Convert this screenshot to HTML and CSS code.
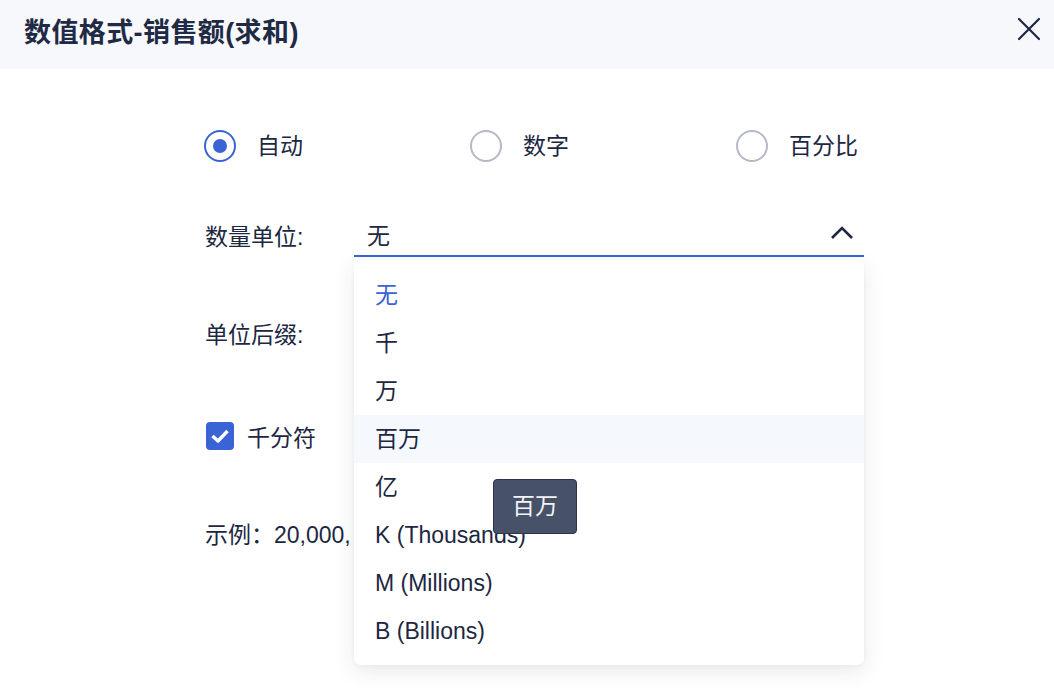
FILE: index.html
```html
<!DOCTYPE html>
<html lang="zh">
<head>
<meta charset="utf-8">
<link rel="stylesheet" href="styles.css">
</head>
<body>
<div class="dialog">
  <div class="header">
    <div class="title">数值格式-销售额(求和)</div>
    <svg class="close" width="24" height="24" viewBox="0 0 24 24"><path d="M2 2 L22 22 M22 2 L2 22" stroke="#1d2742" stroke-width="2.2" stroke-linecap="round" fill="none"/></svg>
  </div>
  <div class="body">
    <div class="radio-row">
      <label class="radio-item checked"><span class="radio"></span><span class="rlabel">自动</span></label>
      <label class="radio-item"><span class="radio"></span><span class="rlabel">数字</span></label>
      <label class="radio-item last"><span class="radio"></span><span class="rlabel">百分比</span></label>
    </div>
    <div class="field unit-row">
      <div class="flabel">数量单位:</div>
      <div class="select">
        <span class="sval">无</span>
        <svg class="chev" width="24" height="14" viewBox="0 0 24 14"><path d="M2 12 L12 2 L22 12" stroke="#1d2742" stroke-width="2.6" fill="none"/></svg>
        <div class="dropdown">
          <div class="opt selected">无</div>
          <div class="opt">千</div>
          <div class="opt">万</div>
          <div class="opt hover">百万<div class="tooltip">百万</div></div>
          <div class="opt">亿</div>
          <div class="opt">K (Thousands)</div>
          <div class="opt">M (Millions)</div>
          <div class="opt">B (Billions)</div>
        </div>
      </div>
    </div>
    <div class="field suffix-row">
      <div class="flabel">单位后缀:</div>
    </div>
    <div class="check-row">
      <span class="checkbox"><svg width="20" height="16" viewBox="0 0 20 16"><path d="M2.5 8 L8 13 L17.5 3" stroke="#fff" stroke-width="3.4" fill="none" stroke-linejoin="round"/></svg></span>
      <span class="clabel">千分符</span>
    </div>
    <div class="example-row">示例：20,000,</div>
  </div>
</div>
</body>
</html>
```
FILE: styles.css
```css
* { box-sizing: border-box; }
html, body { margin: 0; padding: 0; background: #fff; }
body {
  font-family: "Liberation Sans", "Noto Sans CJK SC", sans-serif;
  color: #1d2742;
  width: 1054px;
  height: 688px;
  overflow: hidden;
}
.dialog { width: 1054px; height: 688px; position: relative; }
.header {
  height: 69px;
  background: #f7f8fc;
  display: flex;
  align-items: center;
  justify-content: space-between;
  padding: 0 13px 0 24px;
}
.title {
  font-size: 27px;
  font-weight: 700;
  color: #1f2a44;
  margin-top: -9px;
  letter-spacing: 0.4px;
}
.close { margin-top: -12px; }
.body { padding: 61px 0 0 204px; width: 864px; }
.radio-row { display: flex; height: 32px; align-items: center; }
.radio-item { display: flex; align-items: center; width: 266px; font-size: 23px; }
.radio-item.last { width: auto; }
.radio {
  width: 32px; height: 32px; border-radius: 50%;
  border: 2px solid #b5b9c6;
  display: flex; align-items: center; justify-content: center;
  flex: none;
}
.radio-item.checked .radio { border-color: #3a63d5; }
.radio-item.checked .radio::after {
  content: ""; width: 14px; height: 14px; border-radius: 50%; background: #3a63d5;
}
.rlabel { margin-left: 21px; line-height: 32px; }
.field { display: flex; align-items: center; font-size: 23px; }
.flabel { width: 150px; padding-left: 1px; }
.unit-row { margin-top: 51px; }
.select {
  position: relative;
  width: 510px;
  height: 44px;
  border-bottom: 2px solid #3a63d5;
  display: flex;
  align-items: center;
  justify-content: space-between;
  padding: 0 10px 0 13px;
}
.chev { margin-top: -2px; }
.dropdown {
  position: absolute;
  left: 0;
  top: calc(100% + 5px);
  width: 510px;
  background: #fff;
  border-radius: 7px;
  padding: 11px 0 10px;
  box-shadow: 0 6px 22px rgba(30, 40, 70, 0.10), 0 1px 4px rgba(30, 40, 70, 0.04);
  z-index: 5;
}
.opt {
  position: relative;
  height: 48px;
  line-height: 48px;
  padding-left: 21px;
  font-size: 23px;
  color: #1d2742;
}
.opt.selected { color: #3a63d5; }
.opt.hover { background: #f5f8fd; }
.tooltip {
  position: absolute;
  left: 139px;
  top: 64px;
  width: 84px;
  height: 55px;
  background: #475269;
  border: 1px solid #2c3447;
  border-radius: 4px;
  color: #f2f4f8;
  font-size: 23px;
  line-height: 53px;
  text-align: center;
  z-index: 6;
}
.suffix-row { margin-top: 56px; height: 40px; }
.check-row { display: flex; align-items: center; margin-top: 69px; height: 28px; padding-left: 2px; }
.checkbox {
  width: 28px; height: 28px; border-radius: 4px; background: #3a63d5;
  display: flex; align-items: center; justify-content: center;
}
.clabel { margin-left: 13px; font-size: 23px; }
.example-row { margin-top: 70px; font-size: 23px; padding-left: 1px; line-height: 30px; }
```
